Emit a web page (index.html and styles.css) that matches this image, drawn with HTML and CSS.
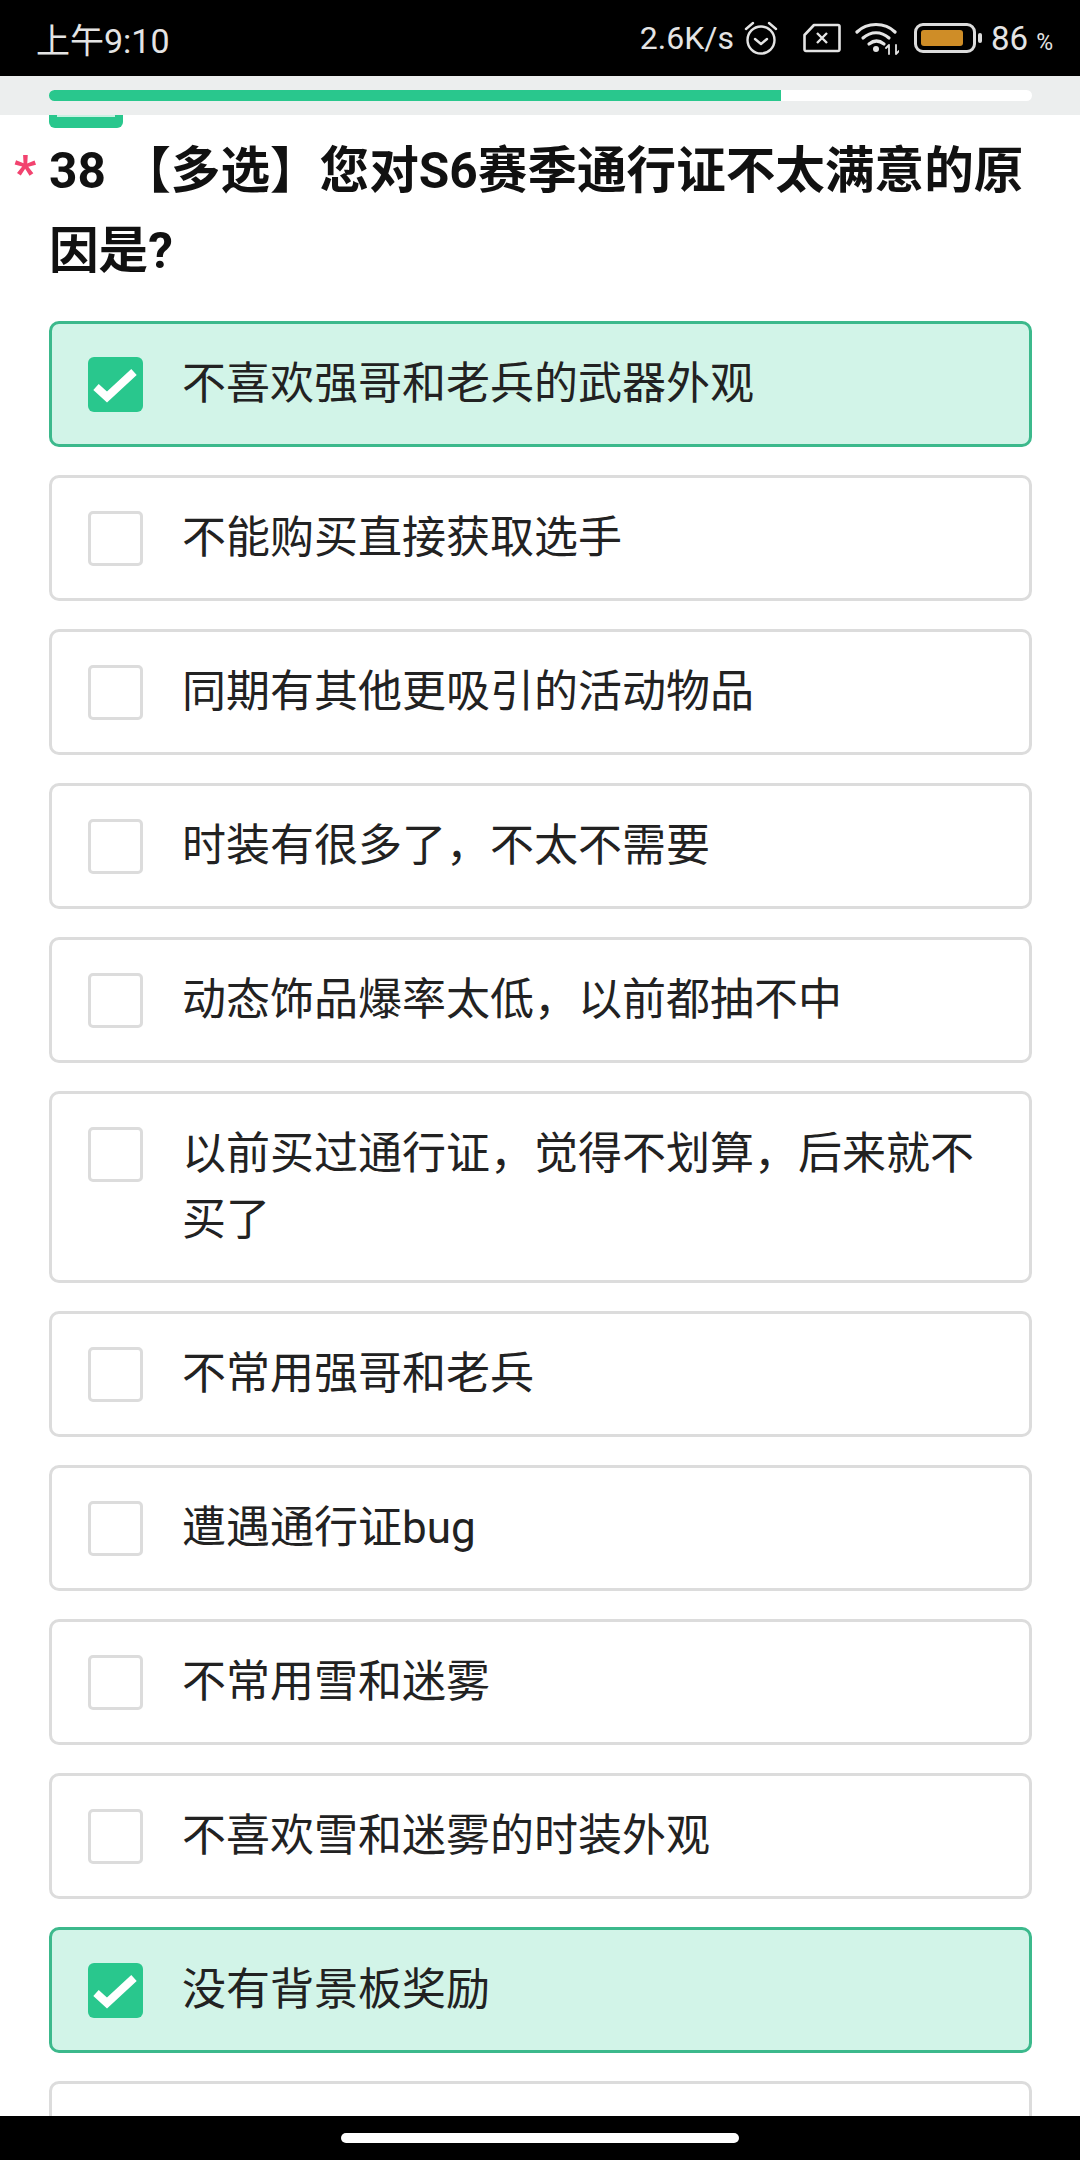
FILE: index.html
```html
<!DOCTYPE html>
<html lang="zh-CN">
	<head>
		<meta charset="utf-8">
		<title>问卷</title>
		<link rel="stylesheet" href="styles.css">
	</head>
	<body>
		<div class="screen">
			<!-- status bar -->
			<div class="status_bar">
				<span class="status_time">上午9:10</span>
				<div class="status_right">
					<span class="net_speed">2.6K/s</span>
					<svg class="ic_alarm" width="36" height="36" viewBox="0 0 36 36" fill="none" stroke="#e4e4e4" stroke-width="2.4" stroke-linecap="round" stroke-linejoin="round">
						<circle cx="18" cy="20" r="13.5"/>
						<path d="M12 19l6 5 6-5"/>
						<path d="M3 9l7-6M33 9l-7-6"/>
					</svg>
					<svg class="ic_sim" width="38" height="30" viewBox="0 0 38 30" fill="none" stroke="#e4e4e4" stroke-width="2.6" stroke-linejoin="round">
						<path d="M11 2h24a1.500 1.500 0 0 1 1.500 1.500v23a1.500 1.500 0 0 1-1.500 1.500H3a1.500 1.500 0 0 1-1.500-1.500V12z"/>
						<path d="M14 10l10 10M24 10l-10 10" stroke-width="2.4"/>
					</svg>
					<svg class="ic_wifi" width="44" height="34" viewBox="0 0 44 34" fill="none" stroke="#e4e4e4" stroke-width="3.200" stroke-linecap="round">
						<path d="M2 11C12 1 30 1 40 11"/>
						<path d="M8 17c8-7 18-7 26 0"/>
						<path d="M14 23c5-4 10-4 15 0"/>
						<circle cx="21" cy="28" r="3" fill="#e4e4e4" stroke="none"/>
						<path d="M34 24v9M41 24v9M34 24l-3 3M41 33l3-3" stroke-width="1.800"/>
					</svg>
					<div class="battery">
						<div class="battery_body"><div class="battery_fill"></div></div>
						<div class="battery_tip"></div>
					</div>
					<span class="battery_num">86<small>%</small></span>
				</div>
			</div>

			<!-- progress -->
			<div class="progress_panel">
				<div class="progress_track"><div class="progress_value" style="width:74.5%"></div></div>
			</div>

			<div class="content">
				<div class="q_tag"></div>
				<div class="q_title">
					<span class="q_required">*</span>
					<h3>38 【多选】您对S6赛季通行证不太满意的原因是?</h3>
				</div>
				<ul class="option_list">
					<li class="option checked"><span class="check_box"><svg width="55" height="55" viewBox="0 0 55 55" fill="none"><path d="M8 30l11 10 27-25" stroke="#fff" stroke-width="8"/></svg></span><span>不喜欢强哥和老兵的武器外观</span></li>
					<li class="option"><span class="check_box"></span><span>不能购买直接获取选手</span></li>
					<li class="option"><span class="check_box"></span><span>同期有其他更吸引的活动物品</span></li>
					<li class="option"><span class="check_box"></span><span>时装有很多了，不太不需要</span></li>
					<li class="option"><span class="check_box"></span><span>动态饰品爆率太低，以前都抽不中</span></li>
					<li class="option"><span class="check_box"></span><span>以前买过通行证，觉得不划算，后来就不买了</span></li>
					<li class="option"><span class="check_box"></span><span>不常用强哥和老兵</span></li>
					<li class="option"><span class="check_box"></span><span>遭遇通行证bug</span></li>
					<li class="option"><span class="check_box"></span><span>不常用雪和迷雾</span></li>
					<li class="option"><span class="check_box"></span><span>不喜欢雪和迷雾的时装外观</span></li>
					<li class="option checked"><span class="check_box"><svg width="55" height="55" viewBox="0 0 55 55" fill="none"><path d="M8 30l11 10 27-25" stroke="#fff" stroke-width="8"/></svg></span><span>没有背景板奖励</span></li>
					<li class="option"><span class="check_box"></span><span>&nbsp;</span></li>
				</ul>
			</div>

			<!-- navigation bar -->
			<div class="nav_bar"><div class="home_pill"></div></div>
		</div>
	</body>
</html>
```

FILE: styles.css
```css
* {
	box-sizing: border-box;
}
body {
	margin: 0;
	background-color: #fff;
	font-family: Roboto, "Noto Sans CJK SC", sans-serif;
}
.screen {
	width: 1080px;
	height: 2160px;
	display: flex;
	flex-direction: column;
	overflow: hidden;
}
.status_bar {
	height: 76px;
	flex: none;
	background-color: #000;
	color: #e4e4e4;
	display: flex;
	align-items: center;
	justify-content: space-between;
	padding: 0 27px 0 36px;
}
.status_time {
	font-size: 34px;
}
.status_right {
	display: flex;
	align-items: center;
}
.net_speed {
	font-size: 32px;
	margin-right: 9px;
}
.ic_alarm {
	margin-right: 24px;
}
.ic_sim {
	margin-right: 14px;
}
.ic_wifi {
	margin-right: 15px;
}
.battery {
	display: flex;
	align-items: center;
	margin-right: 9px;
}
.battery_body {
	width: 62px;
	height: 30px;
	border: 3px solid #dcdcdc;
	border-radius: 9px;
	padding: 4px;
}
.battery_fill {
	width: 42px;
	height: 100%;
	background-color: #cf8d27;
	border-radius: 3px;
}
.battery_tip {
	width: 4px;
	height: 10px;
	margin-left: 2px;
	background-color: #dcdcdc;
	border-radius: 2px;
}
.battery_num {
	font-size: 33px;
}
.battery_num small {
	font-size: 23px;
	margin-left: 8px;
}
.progress_panel {
	height: 39px;
	flex: none;
	background-color: #eceeee;
	padding: 14px 48px 0 49px;
}
.progress_track {
	height: 11px;
	background-color: #fff;
	border-radius: 6px;
	overflow: hidden;
}
.progress_value {
	height: 100%;
	background-color: #29c78d;
}
.content {
	flex: 1;
	min-height: 0;
	overflow: hidden;
	padding: 0 48px 0 49px;
}
.q_tag {
	width: 74px;
	height: 13px;
	padding: 0 8px;
	background-color: #29c78d;
	border-radius: 0 0 6px 6px;
}
/* bottom edge of the tag text, the rest is scrolled under the header */
.q_tag::after {
	content: "";
	display: block;
	height: 2px;
	background-color: rgba(255, 255, 255, 0.75);
}
.q_title {
	position: relative;
	margin-top: 3px;
}
.q_title h3 {
	margin: 0;
	font-size: 49.6px;
	word-spacing: 3px;
	line-height: 80px;
	font-weight: 700;
	color: #111;
}
.q_required {
	position: absolute;
	left: -35px;
	top: 2px;
	font-size: 49px;
	line-height: 80px;
	font-weight: 700;
	color: #f2436f;
}
.option_list {
	list-style: none;
	margin: 30px 0 0;
	padding: 0;
}
.option {
	display: flex;
	align-items: flex-start;
	min-height: 126px;
	margin-bottom: 28px;
	padding: 27px 36px 27px 36px;
	border: 3px solid #dcdcdc;
	border-radius: 10px;
	background-color: #fff;
	font-size: 44px;
	line-height: 66px;
	color: #222;
}
.option.checked {
	border-color: #3cb98c;
	background-color: #d2f4e8;
}
.check_box {
	flex: none;
	width: 55px;
	height: 55px;
	margin-top: 6px;
	margin-right: 39px;
	border: 3px solid #dcdcdc;
	border-radius: 5px;
	background-color: #fff;
}
.checked .check_box {
	border: none;
	border-radius: 6px;
	background-color: #29c78d;
}
.check_box svg {
	display: block;
}
.nav_bar {
	height: 44px;
	flex: none;
	background-color: #000;
	display: flex;
	justify-content: center;
	padding-top: 17px;
}
.home_pill {
	width: 398px;
	height: 10px;
	background-color: #fff;
	border-radius: 5px;
}
```
